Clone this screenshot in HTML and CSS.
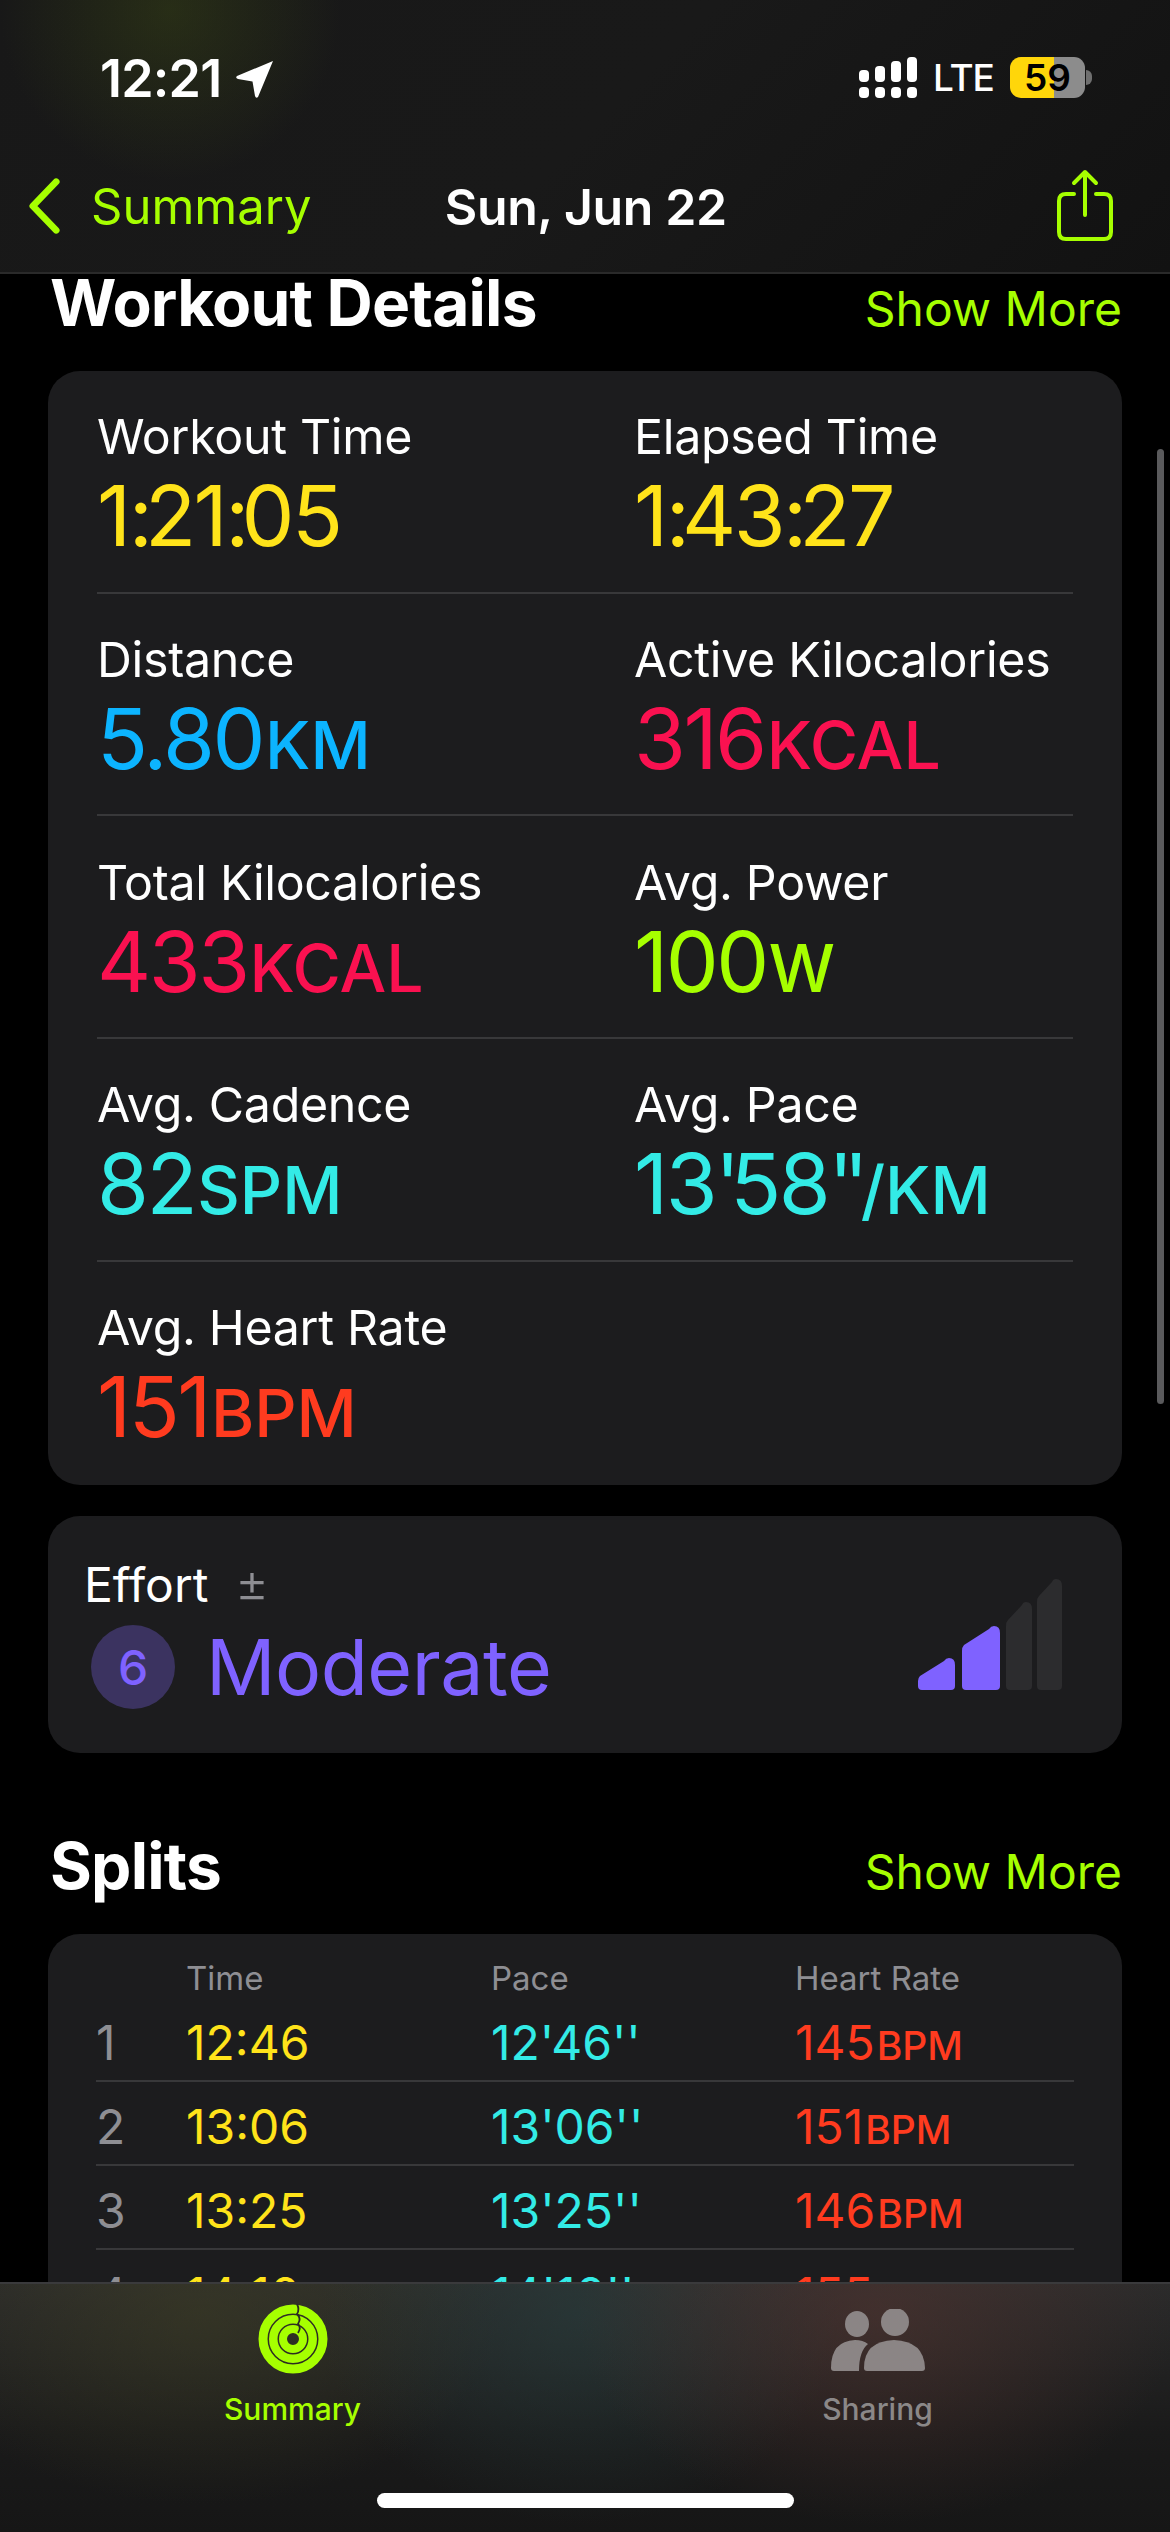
FILE: index.html
```html
<!DOCTYPE html>
<html lang="en">
<head>
<meta charset="utf-8">
<title>Workout</title>
<link rel="stylesheet" href="styles.css">
</head>
<body>
<div class="phone">
  <header class="top">
    <div class="status">
      <div class="status-left">
        <span class="clock">12:21</span>
        <svg class="loc" viewBox="0 0 40 40"><path d="M38 2 L23 38 Q21 40 20 37 L17.500 22.500 L3 20 Q0 19 2 17 Z" fill="#fff"/></svg>
      </div>
      <div class="status-right">
        <svg class="signal" viewBox="0 0 58 41"><g fill="#fff"><rect x="0" y="13" width="10" height="12" rx="4"/><rect x="16" y="9" width="10" height="16" rx="4"/><rect x="32" y="4" width="10" height="21" rx="4"/><rect x="48" y="0" width="10" height="25" rx="4"/><rect x="0" y="30" width="10" height="11" rx="4"/><rect x="16" y="30" width="10" height="11" rx="4"/><rect x="32" y="30" width="10" height="11" rx="4"/><rect x="48" y="30" width="10" height="11" rx="4"/></g></svg>
        <span class="lte">LTE</span>
        <div class="battery"><span>59</span></div>
        <div class="nub"></div>
      </div>
    </div>
    <nav class="nav">
      <div class="back">
        <svg class="chev" viewBox="0 0 34 58"><path d="M29 4 L5 29 L29 54" fill="none" stroke="#a6ff00" stroke-width="7" stroke-linecap="round" stroke-linejoin="round"/></svg>
        <span>Summary</span>
      </div>
      <div class="nav-title">Sun, Jun 22</div>
      <svg class="share" viewBox="0 0 56 72"><path d="M17 25 H9 Q2 25 2 32 V63 Q2 70 9 70 H47 Q54 70 54 63 V32 Q54 25 47 25 H39" fill="none" stroke="#a6ff00" stroke-width="4" stroke-linecap="round"/><path d="M28 46 V3 M17 14 L28 3 L39 14" fill="none" stroke="#a6ff00" stroke-width="4" stroke-linecap="round" stroke-linejoin="round"/></svg>
    </nav>
  </header>

  <main class="scroll">
    <div class="sec-head first">
      <h2>Workout Details</h2>
      <span class="more">Show More</span>
    </div>
    <section class="card details">
      <div class="metric"><div class="lbl">Workout Time</div><div class="val yellow">1<span class="tc">:</span>21<span class="tc">:</span>05</div></div>
      <div class="metric"><div class="lbl">Elapsed Time</div><div class="val yellow">1<span class="tc">:</span>43<span class="tc">:</span>27</div></div>
      <div class="metric"><div class="lbl">Distance</div><div class="val blue">5.80<small>KM</small></div></div>
      <div class="metric"><div class="lbl">Active Kilocalories</div><div class="val pink">316<small>KCAL</small></div></div>
      <div class="metric"><div class="lbl">Total Kilocalories</div><div class="val pink">433<small>KCAL</small></div></div>
      <div class="metric"><div class="lbl">Avg. Power</div><div class="val green">100<small>W</small></div></div>
      <div class="metric"><div class="lbl">Avg. Cadence</div><div class="val cyan">82<small>SPM</small></div></div>
      <div class="metric"><div class="lbl">Avg. Pace</div><div class="val cyan">13<span class="tq">'</span>58<span class="tq">''</span><small>/KM</small></div></div>
      <div class="metric last"><div class="lbl">Avg. Heart Rate</div><div class="val red">151<small>BPM</small></div></div>
    </section>
    <section class="card effort">
      <div class="effort-text">
        <div class="effort-lbl">Effort <span class="pm">±</span></div>
        <div class="effort-val"><span class="badge">6</span><span class="mod">Moderate</span></div>
      </div>
      <svg class="ebars" viewBox="0 0 144 111">
        <path d="M0 107 Q0 111 4 111 H33 Q37 111 37 107 V86 Q37 79 31 79 Q28 79 26 82 L2 97 Q0 99 0 102 Z" fill="#7f62ff"/>
        <path d="M44 107 Q44 111 48 111 H78 Q82 111 82 107 V54 Q82 47 76 47 Q73 47 71 50 L46 66 Q44 68 44 72 Z" fill="#7f62ff"/>
        <path d="M88 107 Q88 111 92 111 H110 Q114 111 114 107 V30 Q114 23 108 23 Q105 23 104 26 L90 41 Q88 43 88 47 Z" fill="#2c2c2e"/>
        <path d="M119 107 Q119 111 123 111 H140 Q144 111 144 107 V7 Q144 0 138 0 Q135 0 134 3 L121 17 Q119 19 119 23 Z" fill="#2c2c2e"/>
      </svg>
    </section>
    <div class="sec-head">
      <h2>Splits</h2>
      <span class="more">Show More</span>
    </div>
    <section class="card splits">
      <div class="s-row s-head"><span></span><span>Time</span><span>Pace</span><span>Heart Rate</span></div>
      <div class="s-row"><span class="num">1</span><span class="yellow">12:46</span><span class="cyan">12'46''</span><span class="red">145<small>BPM</small></span></div>
      <div class="s-row"><span class="num">2</span><span class="yellow">13:06</span><span class="cyan">13'06''</span><span class="red">151<small>BPM</small></span></div>
      <div class="s-row"><span class="num">3</span><span class="yellow">13:25</span><span class="cyan">13'25''</span><span class="red">146<small>BPM</small></span></div>
      <div class="s-row"><span class="num">4</span><span class="yellow">14:10</span><span class="cyan">14'10''</span><span class="red">155<small>BPM</small></span></div>
    </section>
  </main>

  <footer class="tabs">
    <div class="tab on">
      <svg class="rings" viewBox="0 0 72 72">
        <circle cx="36" cy="36" r="30" fill="none" stroke="#a6ff00" stroke-width="9"/>
        <circle cx="36" cy="36" r="19.750" fill="none" stroke="#a6ff00" stroke-width="8.500"/>
        <circle cx="36" cy="36" r="10" fill="none" stroke="#a6ff00" stroke-width="8"/>
        <path d="M40 1 C42 5 42 8 40 11 C43 14 43 18 41 21 C44 24 43 27 41 30" fill="none" stroke="#2a2b24" stroke-width="1.800"/>
      </svg>
      <span>Summary</span>
    </div>
    <div class="tab">
      <svg class="people" viewBox="0 0 94 62"><ellipse cx="26" cy="15" rx="12" ry="13" fill="#8b8585"/><ellipse cx="64" cy="13" rx="14" ry="14" fill="#8b8585"/><path d="M0 59 Q0 32 24 31 Q32 31 37 35 Q28 42 28 62 H3 Q0 62 0 59 Z" fill="#8b8585"/><path d="M33 59 Q33 32 63 31 Q93 32 94 59 Q94 62 91 62 H36 Q33 62 33 59 Z" fill="#8b8585"/></svg>
      <span>Sharing</span>
    </div>
    <div class="home"></div>
  </footer>
  <div class="scrollbar"></div>
</div>
</body>
</html>
```

FILE: styles.css
```css
* { box-sizing: border-box; }
html, body { margin: 0; padding: 0; background: #000; }
body { font-family: Inter, "Noto Sans", sans-serif; color: #fff; }
.phone { position: relative; width: 1170px; height: 2532px; display: flex; flex-direction: column; overflow: hidden; background: #000; }

.top { flex: none; height: 274px; border-bottom: 2px solid #2a2a2a;
  background: radial-gradient(circle at 170px 10px, rgba(65,80,20,.38), rgba(65,80,20,0) 170px), linear-gradient(135deg, #181818, #191919 50%, #121212); }
.status { height: 145px; padding: 56px 0 0 100px; display: flex; justify-content: space-between; align-items: flex-start; }
.status-left { display: flex; align-items: center; gap: 14px; }
.clock { font-size: 52px; font-weight: 600; line-height: 46px; letter-spacing: -.8px; }
.loc { width: 40px; height: 40px; }
.status-right { display: flex; align-items: center; padding-right: 78px; margin-top: 1px; }
.signal { width: 58px; height: 41px; margin-right: 16px; }
.lte { font-size: 37px; font-weight: 500; line-height: 41px; letter-spacing: -1px; width: 77px; }
.battery { width: 75px; height: 41px; border-radius: 11px; background: linear-gradient(90deg, #ffd60a 0 44px, #8c8c8c 44px); color: #000; text-align: center; }
.battery span { font-size: 37px; font-weight: 600; line-height: 41px; }
.nub { width: 6px; height: 15px; margin-left: 1px; border-radius: 0 8px 8px 0; background: #6f6f6f; }

.nav { height: 128px; display: flex; align-items: flex-start; justify-content: space-between; padding: 29px 57px 0 28px; }
.back { display: flex; align-items: center; gap: 30px; color: #a6ff00; font-size: 49px; line-height: 66px; }
.chev { width: 33px; height: 58px; margin-top: -2px; }
.nav-title { flex: 1; text-align: center; font-size: 50px; font-weight: 600; line-height: 66px; padding-right: 197px; letter-spacing: -.4px; }
.share { width: 56px; height: 72px; margin-top: -5px; }

.scroll { flex: 1; min-height: 0; overflow: hidden; padding: 0 48px; }
.sec-head { display: flex; align-items: flex-end; justify-content: space-between; height: 181px; }
.sec-head.first { height: 97px; }
.sec-head h2 { margin: 0 0 39px 2px; font-size: 64px; font-weight: 700; line-height: 58px; letter-spacing: -.8px; }
.more { color: #a6ff00; font-size: 48px; line-height: 60px; margin-bottom: 32px; }

.card { background: #1c1c1e; border-radius: 32px; }
.details { display: grid; grid-template-columns: 537px 1fr; padding: 0 49px; height: 1114px; }
.metric { height: 222.500px; padding-top: 40px; border-bottom: 2px solid #38383a; }
.metric:nth-child(n+9) { border-bottom: none; }
.lbl { font-size: 48.300px; line-height: 52px; letter-spacing: -.3px; }
.val { font-size: 84px; line-height: 92px; letter-spacing: -2.500px; padding-top: 7px; }
.val small { font-size: 66px; font-weight: 500; letter-spacing: 0; margin-left: 2px; }
.tc { letter-spacing: -8px; }
.tq { letter-spacing: -10px; }
.yellow { color: #ffe31a; }
.blue { color: #0cb4ff; } .pink { color: #fa1150; } .green { color: #a6ff00; }
.cyan { color: #33ebe6; } .red { color: #ff3b1f; }

.effort { margin-top: 31px; height: 237px; display: flex; justify-content: space-between; align-items: flex-start; padding: 40px 60px 0 36px; }
.effort-lbl { font-size: 48px; line-height: 56px; }
.pm { color: #8e8e93; font-size: 52px; font-weight: 300; margin-left: 13px; }
.effort-val { display: flex; align-items: center; gap: 31px; margin-left: 7px; margin-top: 12px; }
.badge { width: 84px; height: 84px; border-radius: 50%; background: #3b3360; color: #7f62ff; font-size: 48px; font-weight: 500; display: flex; align-items: center; justify-content: center; }
.mod { color: #7f62ff; font-size: 77px; line-height: 84px; letter-spacing: -.5px; }
.ebars { width: 144px; height: 111px; margin-top: 23px; }

.splits { padding: 0 48px; height: 500px; }
.s-row { display: grid; grid-template-columns: 90px 305px 304px 1fr; align-items: center; height: 84px; padding-top: 6px; border-bottom: 2px solid #38383a; font-size: 48px; }
.s-row small { font-size: 39px; font-weight: 500; margin-left: 2px; }
.s-head { height: 64px; padding-top: 24px; border-bottom: none; font-size: 33px; color: #8e8e93; }
.num { color: #8e8e93; }

.tabs { flex: none; height: 250px; position: relative; display: grid; grid-template-columns: 585px 585px; align-content: start; padding-top: 19px; border-top: 2px solid #3a3a3c;
  background: radial-gradient(ellipse 300px 210px at 877px 30px, rgba(90,55,50,.5), rgba(90,55,50,0)), radial-gradient(ellipse 260px 210px at 580px 30px, rgba(40,62,62,.6), rgba(40,62,62,0)), radial-gradient(ellipse 300px 190px at 200px 30px, rgba(62,62,35,.55), rgba(62,62,35,0)), linear-gradient(#2b2b2b, #1a1a1a 60%, #161616); }
.tab { display: flex; flex-direction: column; align-items: center; color: #8b8888; font-size: 30px; font-weight: 500; line-height: 38px; }
.tab.on { color: #a6ff00; }
.rings { width: 72px; height: 72px; }
.people { width: 94px; height: 62px; margin: 6px 0 4px; }
.tab span { margin-top: 15px; }
.home { position: absolute; left: 377px; bottom: 24px; width: 417px; height: 15px; border-radius: 8px; background: #fff; }
.scrollbar { position: absolute; left: 1157px; top: 449px; width: 7px; height: 955px; border-radius: 4px; background: #5a5a5c; }
```
